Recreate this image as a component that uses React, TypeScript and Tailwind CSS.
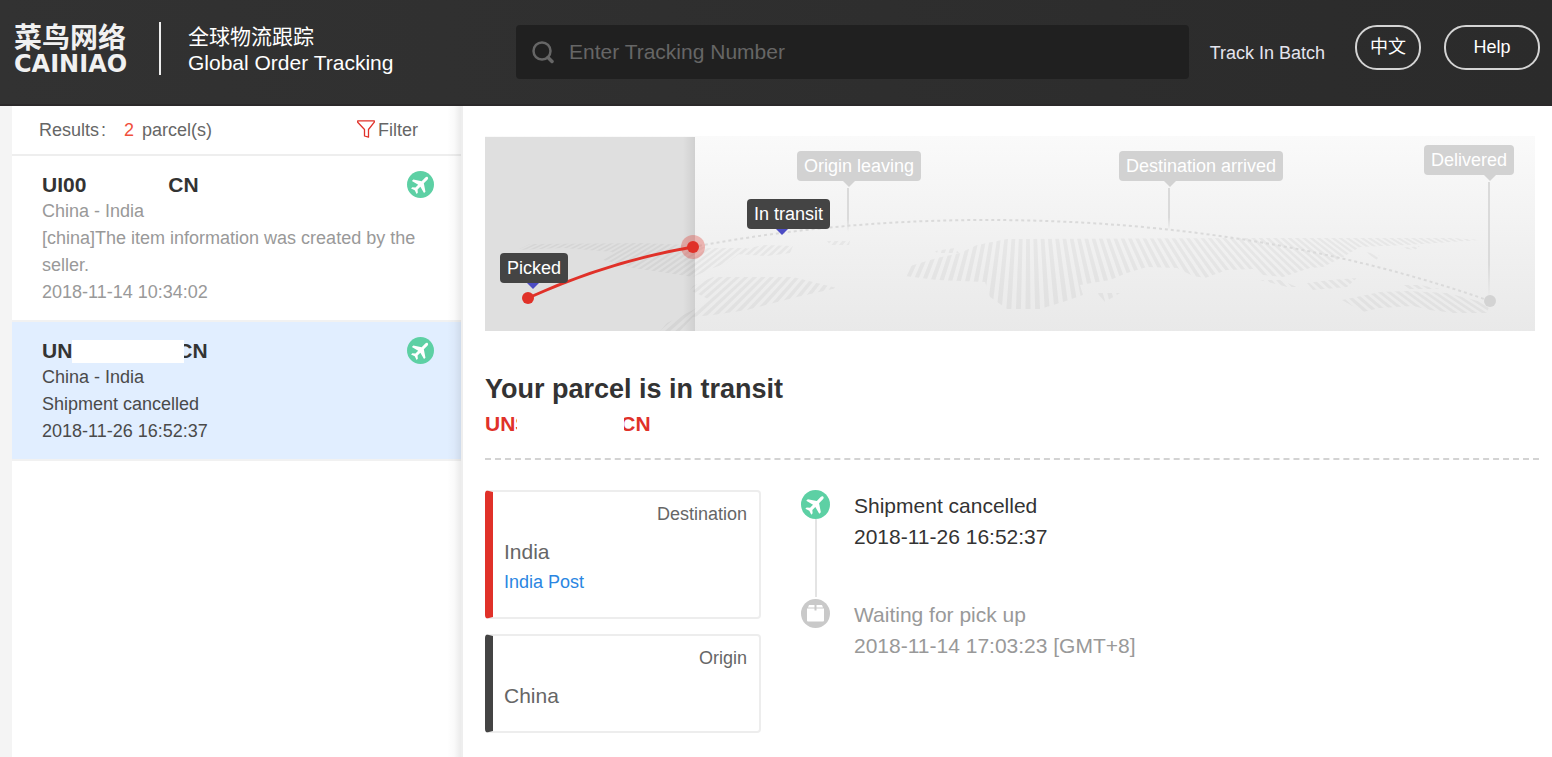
import type { ReactNode } from "react";

const HORIZON = { x: 543, y: -120 };

/* Perspective rays that fan out from the vanishing point; the land shapes clip them. */
const rays = Array.from({ length: 141 }, (_, i) => {
  const x = HORIZON.x + (i - 70) * 10.3;
  return `M${HORIZON.x} ${HORIZON.y}L${x - 2.7} 195H${x + 2.7}Z`;
}).join("");

const land = [
  "32,114 45,108 155,107 208,109 222,112 262,112 242,127 228,132 208,141 182,137 148,132 118,124 128,116 78,112",
  "208,150 228,141 308,141 352,152 312,161 262,174 228,179 208,181 195,195 175,195 182,187 208,174 225,164 205,154",
  "235,119 278,109 308,110 305,117 282,120 248,118",
  "342,105 365,105 364,109 345,109",
  "450,115 470,112 474,117 452,117",
  "420,140 425,130 452,122 475,117 492,109 522,103 765,102 968,102 995,104 922,109 875,111 858,121 838,131 825,132 798,141 778,139 768,133 742,134 720,142 708,140 692,132 662,131 642,137 625,144 595,149 598,159 578,166 555,173 522,173 505,161 500,146 452,144",
  "612,157 635,157 620,166",
  "915,112 935,110 930,114",
  "775,144 795,144 812,151 802,151",
  "822,147 845,144 872,142 862,151 828,154",
  "882,116 895,120 890,125",
  "857,164 895,156 922,155 962,157 1005,168 1002,177 968,177 945,174 928,170 895,172 878,176",
  "915,149 935,149 955,153 922,153",
];

const pointers = [
  { x: 48, y: 147, fill: "#4c4cc4" },
  { x: 297, y: 93, fill: "#4c4cc4" },
  { x: 364, y: 45, fill: "#d2d2d2" },
  { x: 685, y: 45, fill: "#d2d2d2" },
  { x: 1005, y: 39, fill: "#d2d2d2" },
];

function RouteDrawing() {
  return (
    <svg width="1050" height="195" viewBox="0 0 1050 195" aria-hidden="true" className="block">
      <defs>
        <linearGradient id="sky" x1="0" y1="0" x2="0" y2="1">
          <stop offset="0" stopColor="#fafafa" />
          <stop offset="1" stopColor="#e9e9e9" />
        </linearGradient>
        <linearGradient id="edge" x1="0" y1="0" x2="1" y2="0">
          <stop offset="0" stopColor="#000" stopOpacity="0" />
          <stop offset="1" stopColor="#000" stopOpacity="0.07" />
        </linearGradient>
        <linearGradient id="pole" x1="0" y1="0" x2="0" y2="1">
          <stop offset="0" stopColor="#dadada" />
          <stop offset="0.7" stopColor="#dadada" />
          <stop offset="1" stopColor="#dadada" stopOpacity="0" />
        </linearGradient>
        <filter id="soft">
          <feGaussianBlur stdDeviation="0.5" />
        </filter>
        <clipPath id="land">
          {land.map((p) => (
            <polygon key={p} points={p} />
          ))}
        </clipPath>
      </defs>
      <rect width="1050" height="195" fill="url(#sky)" />
      <rect y="1" width="210" height="194" fill="#dfdfdf" />
      <g filter="url(#soft)">
        <g clipPath="url(#land)">
          <path d={rays} fill="#000" fillOpacity="0.043" />
        </g>
      </g>
      <rect x="198" y="1" width="12" height="194" fill="url(#edge)" />
      <path
        d="M208 111Q350 84 502 84C640 84 820 100 1005 165"
        fill="none"
        stroke="#dadada"
        strokeWidth="2"
        strokeDasharray="3 3"
      />
      <rect x="362" y="52" width="2" height="44" fill="url(#pole)" />
      <rect x="683" y="52" width="2" height="42" fill="url(#pole)" />
      <rect x="1003" y="46" width="2" height="118" fill="url(#pole)" />
      <circle cx="1005" cy="165" r="6" fill="#d3d3d3" />
      <path d="M43 162Q125 125 208 111" fill="none" stroke="#e03129" strokeWidth="3" />
      <circle cx="43" cy="162" r="6" fill="#e03129" />
      <circle cx="208" cy="111" r="12" fill="#e03129" fillOpacity="0.32" />
      <circle cx="208" cy="111" r="6" fill="#e03129" />
      {pointers.map((p) => (
        <path key={p.x} d={`M${p.x - 6} ${p.y}h12l-6 6z`} fill={p.fill} />
      ))}
    </svg>
  );
}

function Plane({ className }: { className: string }) {
  return (
    <svg viewBox="0 0 29 29" aria-hidden="true" className={className}>
      <circle cx="14.5" cy="14.5" r="14.5" fill="#5dd0a4" />
      <path
        transform="translate(14 15) rotate(45) scale(0.96)"
        fill="#fff"
        d="M0-12.2C1-12.2 1.7-11.2 1.7-10V-4.3L9.6 1V3.3L1.7 1.2V5.6L4.4 7.9V9.8L0 8.4L-4.4 9.8V7.9L-1.7 5.6V1.2L-9.6 3.3V1L-1.7-4.3V-10C-1.7-11.2-1-12.2 0-12.2Z"
      />
    </svg>
  );
}

function Box({ className }: { className: string }) {
  return (
    <svg viewBox="0 0 29 29" aria-hidden="true" className={className}>
      <circle cx="14.5" cy="14.5" r="14.5" fill="#c9c9c9" />
      <path fill="#fff" d="M8 6h5.500v2.600H7zM15.500 6H21l1 2.600h-6.500zM6 9.500h7.500v2h2v-2H23V21.500a1 1 0 0 1-1 1H7a1 1 0 0 1-1-1z" />
    </svg>
  );
}

type ParcelProps = { code: ReactNode; lines: string[]; selected?: boolean };

function Parcel({ code, lines, selected }: ParcelProps) {
  return (
    <li
      className={
        selected
          ? "flex items-start border-b-2 border-[#f1f1f1] bg-[#e1eeff] pt-4 pr-[27px] pb-[14px] pl-[30px] text-[#4a4a4a]"
          : "flex items-start border-b-2 border-[#f1f1f1] pt-4 pr-[27px] pb-[14px] pl-[30px] text-[#999]"
      }
    >
      <div className="min-w-0 flex-1 text-[18px] leading-[27px]">
        <h2 className="flex h-[26px] items-center text-[21px] leading-[26px] font-bold text-[#333]">{code}</h2>
        {lines.map((line) => (
          <p key={line}>{line}</p>
        ))}
      </div>
      <Plane className="-mt-px -ml-[27px] h-[27px] w-[27px] shrink-0" />
    </li>
  );
}

function Place({ label, name, bar, children }: { label: string; name: string; bar: string; children?: ReactNode }) {
  return (
    <section className={`rounded border-2 border-l-8 border-[#ededed] pt-[7px] pr-3 pb-5 pl-[11px] leading-[30px] text-[#666] ${bar}`}>
      <p className="text-right text-[18px]">{label}</p>
      <h3 className="mt-2 text-[21px]">{name}</h3>
      {children}
    </section>
  );
}

const tag = "absolute h-[30px] rounded px-[7px] text-[18px] leading-[30px] whitespace-nowrap text-white";

export default function App() {
  return (
    <div className="flex min-h-screen flex-col bg-white font-['Liberation_Sans','Noto_Sans_CJK_SC',sans-serif] text-[#333]">
      <header className="flex h-[106px] items-start border-b-2 border-[#2b292a] bg-linear-to-r from-[#323232] to-[#2b2b2b] pr-3 pl-[14px] text-white">
        <div className="mt-[22px] w-[145px] shrink-0 text-[#f1f1f1]">
          <div className="font-['Noto_Sans_CJK_SC',sans-serif] text-[28px] leading-7 font-bold">菜鸟网络</div>
          <div className="font-['DejaVu_Sans',sans-serif] text-[24px] leading-7 font-bold">CAINIAO</div>
        </div>
        <div className="mt-[22px] h-[53px] w-0.5 shrink-0 bg-[#eee]" />
        <h1 className="mt-6 w-[355px] shrink-0 pl-[27px] text-[21px] leading-[26px]">
          <span className="block">全球物流跟踪</span>
          <span className="block">Global Order Tracking</span>
        </h1>
        <label className="mt-[25px] flex h-[54px] min-w-0 flex-1 items-center rounded bg-[#202020] pl-4">
          <svg width="22" height="23" viewBox="0 0 22 23" fill="none" stroke="#666" aria-hidden="true" className="shrink-0">
            <circle cx="10" cy="10" r="8.500" strokeWidth="2.500" />
            <path d="M16 16.500l4 4" strokeWidth="3.500" strokeLinecap="round" />
          </svg>
          <input
            type="text"
            aria-label="Tracking number"
            placeholder="Enter Tracking Number"
            className="ml-[15px] h-full min-w-0 flex-1 bg-transparent text-[21px] text-white outline-none placeholder:text-[#666]"
          />
        </label>
        <a href="#batch" className="mt-[38px] ml-[21px] shrink-0 text-[18px] leading-[30px] text-[#e4e4ee]">
          Track In Batch
        </a>
        <button type="button" className="mt-[25px] ml-[30px] h-[45px] w-[66px] shrink-0 rounded-[22px] border-2 border-[#d4d4d4] text-[18px]">
          中文
        </button>
        <button type="button" className="mt-[25px] ml-[23px] h-[45px] w-24 shrink-0 rounded-[22px] border-2 border-[#d4d4d4] text-[18px]">
          Help
        </button>
      </header>

      <div className="flex flex-1">
        <aside className="relative w-[463px] shrink-0 border-r-2 border-l-12 border-r-[#eee] border-l-[#f4f4f4]">
          <div className="flex h-[50px] items-center border-b-2 border-[#eee] pr-[43px] pl-[27px] text-[18px] text-[#666]">
            <span>Results</span>
            <span className="ml-0.5">:</span>
            <span className="ml-[18px] text-[#f0503c]">2</span>
            <span className="ml-2">parcel(s)</span>
            <button type="button" className="ml-auto flex items-center gap-[3px]">
              <svg width="18" height="18" viewBox="0 0 18 18" fill="none" stroke="#e03129" strokeWidth="1.300" strokeLinejoin="round" aria-hidden="true" className="-mt-0.5">
                <path d="M.7.800H17.300V2.200L11.500 9.500V17.200L7.500 16V9.500L.7 2.200Z" />
              </svg>
              Filter
            </button>
          </div>
          <ul>
            <Parcel
              code={
                <>
                  <span>UI00</span>
                  <span className="ml-[82px]">CN</span>
                </>
              }
              lines={["China - India", "[china]The item information was created by the seller.", "2018-11-14 10:34:02"]}
            />
            <Parcel
              selected
              code={
                <>
                  <span>UN</span>
                  <span className="z-10 -mr-[7px] h-[23px] w-[112px] bg-white" />
                  <span>CN</span>
                </>
              }
              lines={["China - India", "Shipment cancelled", "2018-11-26 16:52:37"]}
            />
          </ul>
          <div className="pointer-events-none absolute inset-y-0 right-0 w-[14px] bg-linear-to-r from-transparent via-black/2 to-black/8" />
        </aside>

        <main className="min-w-0 flex-1 pt-[30px] pr-[13px] pl-[22px]">
          <div className="relative h-[195px] max-w-[1050px] overflow-hidden">
            <RouteDrawing />
            <span className={`${tag} top-[117px] left-[15px] bg-[#444]`}>Picked</span>
            <span className={`${tag} top-[63px] left-[262px] bg-[#444]`}>In transit</span>
            <span className={`${tag} top-[15px] left-[312px] bg-[#d2d2d2]`}>Origin leaving</span>
            <span className={`${tag} top-[15px] left-[634px] bg-[#d2d2d2]`}>Destination arrived</span>
            <span className={`${tag} top-[9px] left-[939px] bg-[#d2d2d2]`}>Delivered</span>
          </div>

          <h2 className="mt-[38px] text-[27px] leading-10 font-bold">Your parcel is in transit</h2>
          <p className="flex h-[30px] items-center text-[21px] leading-[30px] font-bold text-[#e03129]">
            <span>UNS</span>
            <span className="z-10 -mr-1 -ml-3 h-[23px] w-[107px] bg-white" />
            <span>CN</span>
          </p>
          <div className="mt-[19px] border-t-2 border-dashed border-[#d3d3d3]" />

          <div className="mt-[30px] flex items-start gap-10">
            <div className="flex w-[276px] shrink-0 flex-col gap-[15px]">
              <Place label="Destination" name="India" bar="border-l-[#e03129]">
                <a href="#india-post" className="block text-[18px] text-[#2a86e2]">
                  India Post
                </a>
              </Place>
              <Place label="Origin" name="China" bar="border-l-[#444]" />
            </div>
            <ol className="min-w-0 flex-1 text-[21px] leading-[31px]">
              <li className="flex gap-6">
                <div className="flex flex-col items-center pb-0.5">
                  <Plane className="h-[29px] w-[29px]" />
                  <div className="w-0.5 flex-1 bg-[#e4e4e4]" />
                </div>
                <div className="pb-[47px]">
                  <p>Shipment cancelled</p>
                  <p>2018-11-26 16:52:37</p>
                </div>
              </li>
              <li className="flex gap-6 text-[#999]">
                <Box className="h-[29px] w-[29px]" />
                <div>
                  <p>Waiting for pick up</p>
                  <p>2018-11-14 17:03:23 [GMT+8]</p>
                </div>
              </li>
            </ol>
          </div>
        </main>
      </div>
    </div>
  );
}
